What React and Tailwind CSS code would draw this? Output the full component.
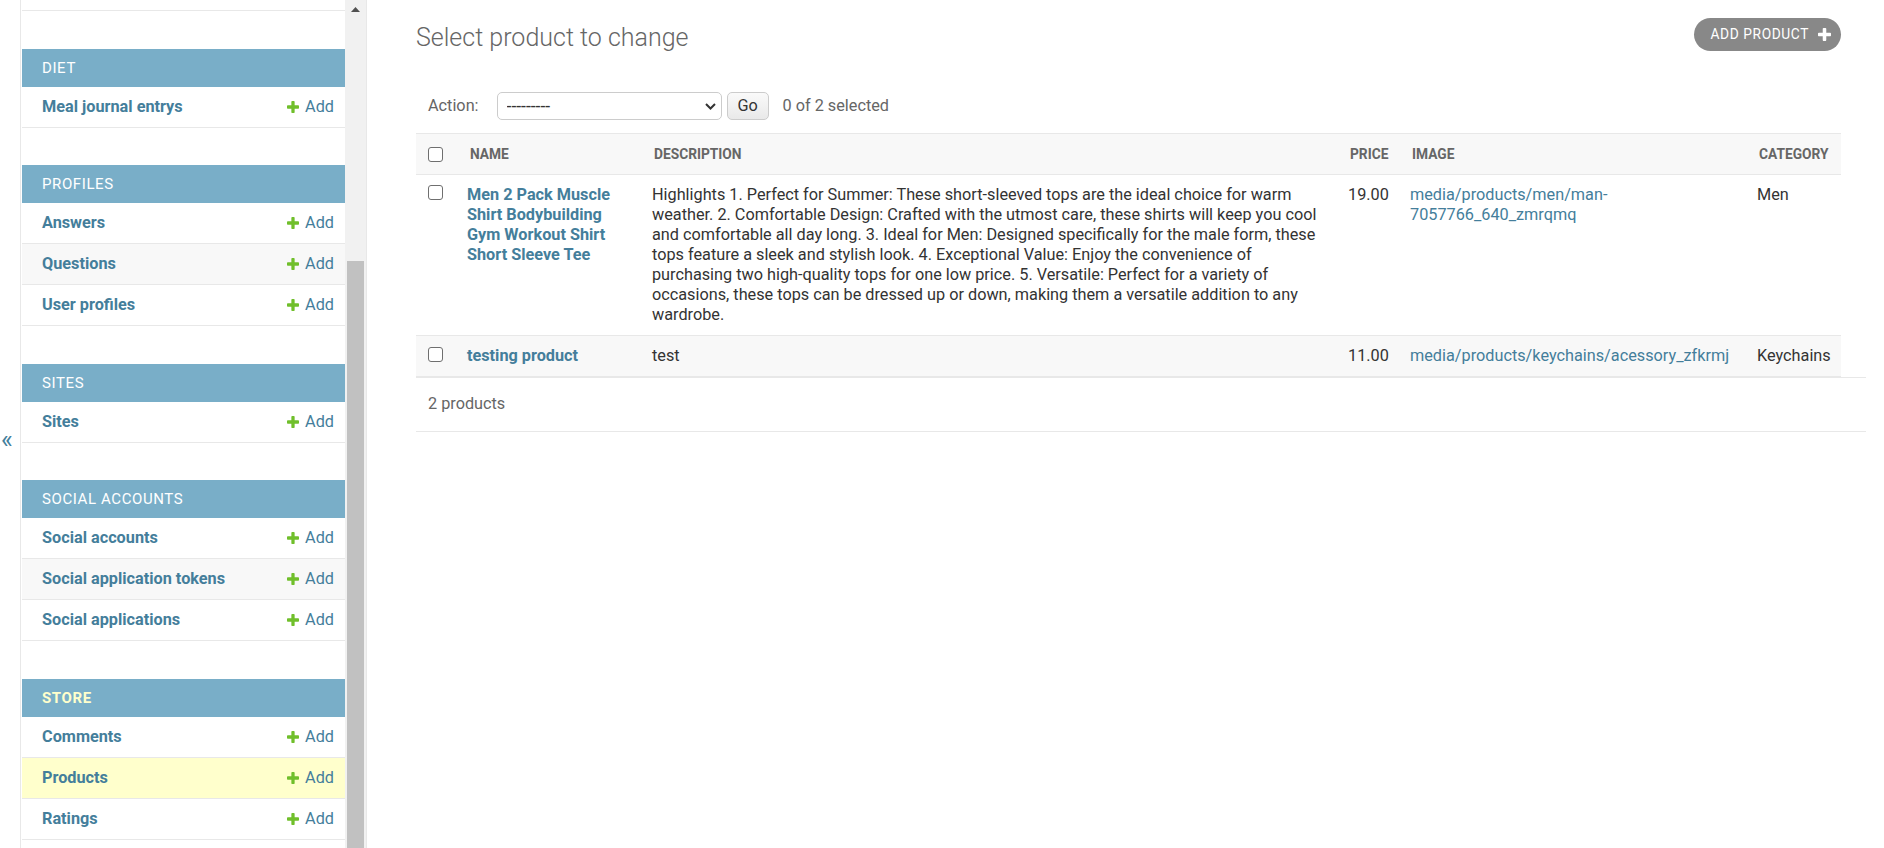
import React from "react";

const PLUS_D =
  "M1600 796v192q0 40-28 68t-68 28h-416v416q0 40-28 68t-68 28h-192q-40 0-68-28t-28-68v-416h-416q-40 0-68-28t-28-68v-192q0-40 28-68t68-28h416v-416q0-40 28-68t68-28h192q40 0 68 28t28 68v416h416q40 0 68 28t28 68z";

function PlusIcon({ className, fill }) {
  return (
    <svg viewBox="192 188 1408 1408" className={className} aria-hidden="true">
      <path fill={fill} d={PLUS_D} />
    </svg>
  );
}

const modules = [
  { name: "Diet", rows: ["Meal journal entrys"], mb: "mb-[37px]" },
  { name: "Profiles", rows: ["Answers", "Questions", "User profiles"], mb: "mb-[38px]" },
  { name: "Sites", rows: ["Sites"], mb: "mb-[37px]" },
  {
    name: "Social accounts",
    rows: ["Social accounts", "Social application tokens", "Social applications"],
    mb: "mb-[38px]",
  },
  { name: "Store", rows: ["Comments", "Products", "Ratings"], mb: "mb-[38px]", current: true },
];

function SideModule({ m }) {
  return (
    <div className={m.mb}>
      <div
        className={
          "h-[38px] bg-[#79aec8] pl-[20px] flex items-center text-[15px] tracking-[0.6px] uppercase " +
          (m.current ? "text-[#ffffcc] font-bold" : "text-white font-normal")
        }
      >
        {m.name}
      </div>
      {m.rows.map((r, i) => {
        const bg =
          m.current && r === "Products"
            ? "bg-[#ffffcc]"
            : i % 2 === 1
            ? "bg-[#f8f8f8]"
            : "bg-white";
        return (
          <div
            key={r}
            className={
              "h-[41px] border-b border-[#e8e8e8] pl-[20px] pr-[11px] flex items-center justify-between " +
              bg
            }
          >
            <a className="text-[16.25px] font-bold text-[#447e9b] leading-[20px]">{r}</a>
            <a className="flex items-center gap-[6px] text-[16.25px] text-[#447e9b] leading-[20px]">
              <PlusIcon className="w-[12px] h-[12px]" fill="#70bf2b" />
              Add
            </a>
          </div>
        );
      })}
    </div>
  );
}

function Checkbox() {
  return (
    <span className="block w-[15px] h-[15px] border-[1.5px] border-[#6f6f6f] rounded-[3px] bg-white" />
  );
}

const cols = "grid grid-cols-[41px_185px_696px_62px_347px_94px]";

const desc = [
  "Highlights 1. Perfect for Summer: These short-sleeved tops are the ideal choice for warm",
  "weather. 2. Comfortable Design: Crafted with the utmost care, these shirts will keep you cool",
  "and comfortable all day long. 3. Ideal for Men: Designed specifically for the male form, these",
  "tops feature a sleek and stylish look. 4. Exceptional Value: Enjoy the convenience of",
  "purchasing two high-quality tops for one low price. 5. Versatile: Perfect for a variety of",
  "occasions, these tops can be dressed up or down, making them a versatile addition to any",
  "wardrobe.",
];

function Lines({ lines, className = "" }) {
  return (
    <>
      {lines.map((l, i) => (
        <span key={i} className={"block whitespace-nowrap " + className}>
          {l}
        </span>
      ))}
    </>
  );
}

export default function App() {
  return (
    <div className="flex h-[848px] overflow-hidden bg-white font-[Roboto,'Liberation_Sans',sans-serif] text-[#333]">
      {/* toggle column */}
      <div className="w-[21px] shrink-0 border-r border-[#e8e8e8] flex justify-start pl-[1px]">
        <span className="pt-[427px] text-[25px] leading-[25px] text-[#447e9b]">«</span>
      </div>

      {/* nav sidebar */}
      <div className="w-[346px] shrink-0 flex border-r border-[#e8e8e8] pl-[1px]">
        <div className="w-[323px] shrink-0 overflow-hidden">
          <div className="h-[11px] border-b border-[#e8e8e8] mb-[38px]" />
          {modules.map((m) => (
            <SideModule key={m.name} m={m} />
          ))}
        </div>
        {/* scrollbar */}
        <div className="w-[21px] shrink-0 bg-[#f1f1f1] flex flex-col">
          <div className="h-[261px] flex justify-center pt-[7px]">
            <svg width="9" height="5" viewBox="0 0 9 5" aria-hidden="true">
              <path d="M4.5 0 L9 5 L0 5 Z" fill="#505050" />
            </svg>
          </div>
          <div className="flex-1 mx-[2px] bg-[#c1c1c1]" />
        </div>
      </div>

      {/* main */}
      <main className="flex-1 pl-[49px] pr-[18px] pt-[18px]">
        <div className="w-[1425px] flex justify-between items-start">
          <h1 className="mt-[5px] text-[25px] leading-[29px] font-light text-[#666]">
            Select product to change
          </h1>
          <a className="h-[33px] rounded-full bg-[#888] pl-[16px] pr-[10px] flex items-center gap-[9px] text-white text-[13.75px] tracking-[0.6px] uppercase">
            Add product
            <PlusIcon className="w-[13px] h-[13px]" fill="#ffffff" />
          </a>
        </div>

        {/* actions */}
        <div className="mt-[40px] h-[28px] flex items-center pl-[12px] text-[16.25px] text-[#666]">
          <span>Action:</span>
          <div className="relative ml-[18px] w-[225px] h-[28px]">
            <select className="appearance-none w-full h-full border border-[#ccc] rounded-[5px] bg-white pl-[9px] text-[17.5px] text-[#333]">
              <option>---------</option>
            </select>
            <svg
              className="absolute right-[6px] top-[11px] pointer-events-none"
              width="11"
              height="7"
              viewBox="0 0 11 7"
              aria-hidden="true"
            >
              <path d="M1 1 L5.5 5.5 L10 1" stroke="#333" strokeWidth="2" fill="none" />
            </svg>
          </div>
          <button className="ml-[5px] w-[42px] h-[28px] border border-[#ccc] rounded-[5px] bg-gradient-to-b from-[#fafafa] to-[#e9e9e9] text-[16.25px] text-[#333]">
            Go
          </button>
          <span className="ml-[14px]">0 of 2 selected</span>
        </div>

        {/* table */}
        <div className="mt-[13px] w-[1425px]">
          <div
            className={
              cols +
              " h-[42px] items-center bg-[#f8f8f8] border-y border-[#e8e8e8] text-[13.75px] font-bold uppercase text-[#666]"
            }
          >
            <div className="pl-[12px]">
              <Checkbox />
            </div>
            <div className="pl-[13px]">Name</div>
            <div className="pl-[12px]">Description</div>
            <div className="pl-[12px]">Price</div>
            <div className="pl-[12px]">Image</div>
            <div className="pl-[12px]">Category</div>
          </div>

          <div className={cols + " border-b border-[#e8e8e8] bg-white text-[16.25px] leading-[20px] py-[10px]"}>
            <div className="pl-[12px]">
              <Checkbox />
            </div>
            <div className="pl-[10px] font-bold text-[#447e9b]">
              <Lines lines={["Men 2 Pack Muscle", "Shirt Bodybuilding", "Gym Workout Shirt", "Short Sleeve Tee"]} />
            </div>
            <div className="pl-[10px]">
              <Lines lines={desc} />
            </div>
            <div className="pl-[10px]">19.00</div>
            <div className="pl-[10px] text-[#447e9b]">
              <Lines lines={["media/products/men/man-", "7057766_640_zmrqmq"]} />
            </div>
            <div className="pl-[10px]">Men</div>
          </div>

          <div className={cols + " border-b border-[#e8e8e8] bg-[#f8f8f8] text-[16.25px] leading-[20px] py-[10px]"}>
            <div className="pl-[12px] pt-[1px]">
              <Checkbox />
            </div>
            <div className="pl-[10px] font-bold text-[#447e9b] whitespace-nowrap">testing product</div>
            <div className="pl-[10px]">test</div>
            <div className="pl-[10px]">11.00</div>
            <div className="pl-[10px] text-[#447e9b] whitespace-nowrap">
              media/products/keychains/acessory_zfkrmj
            </div>
            <div className="pl-[10px]">Keychains</div>
          </div>
        </div>

        <div className="h-[55px] border-y border-[#e8e8e8] flex items-center pl-[12px] text-[16.25px] text-[#666]">
          2 products
        </div>
      </main>
    </div>
  );
}
